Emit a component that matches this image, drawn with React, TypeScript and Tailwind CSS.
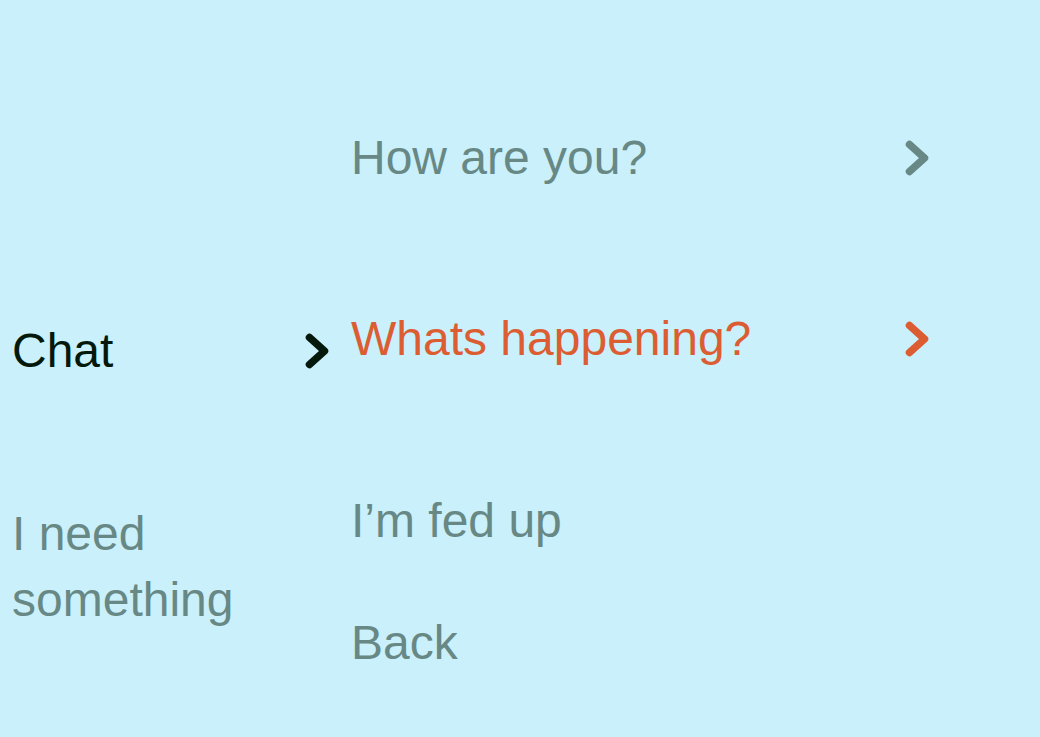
import React from "react";

function Chevron({ color }: { color: string }) {
  return (
    <svg width="24" height="36" viewBox="0 0 24 36" fill="none" className="shrink-0">
      <path
        d="M4.5 4.5 L19.5 18 L4.5 31.5"
        stroke={color}
        strokeWidth="7.5"
        strokeLinecap="round"
        strokeLinejoin="round"
      />
    </svg>
  );
}

export default function App() {
  return (
    <div className="w-[1040px] h-[737px] bg-[#c9f0fb] flex overflow-hidden font-['Liberation_Sans','Helvetica',sans-serif] text-[48px] leading-[66px]">
      <div className="w-[351px] pl-[12px] pr-[22px] pt-[318px] flex flex-col">
        <div className="flex items-center justify-between text-[#04190c]">
          <span>Chat</span>
          <Chevron color="#04190c" />
        </div>
        <div className="mt-[117px] text-[#678884]">
          I need
          <br />
          something
        </div>
      </div>
      <div className="w-[578px] pt-[125px] flex flex-col">
        <div className="flex items-center justify-between text-[#678884]">
          <span>How are you?</span>
          <Chevron color="#678884" />
        </div>
        <div className="mt-[115px] flex items-center justify-between text-[#dc5d31]">
          <span>Whats happening?</span>
          <Chevron color="#dc5d31" />
        </div>
        <div className="mt-[116px] text-[#678884]">I’m fed up</div>
        <div className="mt-[56px] text-[#678884]">Back</div>
      </div>
    </div>
  );
}
